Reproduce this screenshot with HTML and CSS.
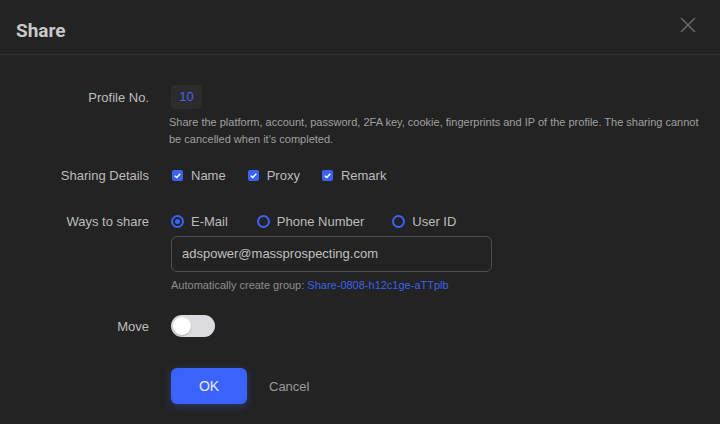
FILE: index.html
```html
<!DOCTYPE html>
<html>
<head>
<meta charset="utf-8">
<link rel="stylesheet" href="styles.css">
</head>
<body>
<div class="dialog">
  <div class="header">
    <div class="title">Share</div>
    <svg class="close" width="16" height="16" viewBox="0 0 16 16"><path d="M1 1L15 15M15 1L1 15" stroke="#6a6a6a" stroke-width="1.5" fill="none"/></svg>
  </div>
  <div class="body">
    <div class="row row-profile">
      <div class="label">Profile No.</div>
      <div class="content">
        <div class="profile-no">10</div>
        <div class="desc">Share the platform, account, password, 2FA key, cookie, fingerprints and IP of the profile. The sharing cannot be cancelled when it's completed.</div>
      </div>
    </div>
    <div class="row row-details">
      <div class="label">Sharing Details</div>
      <div class="content options">
        <span class="opt"><span class="cb"><svg width="12" height="12" viewBox="0 0 12 12"><path d="M3 6.2L5.2 8.2L9 4" stroke="#fff" stroke-width="1.6" fill="none"/></svg></span>Name</span>
        <span class="opt"><span class="cb"><svg width="12" height="12" viewBox="0 0 12 12"><path d="M3 6.2L5.2 8.2L9 4" stroke="#fff" stroke-width="1.6" fill="none"/></svg></span>Proxy</span>
        <span class="opt"><span class="cb"><svg width="12" height="12" viewBox="0 0 12 12"><path d="M3 6.2L5.2 8.2L9 4" stroke="#fff" stroke-width="1.6" fill="none"/></svg></span>Remark</span>
      </div>
    </div>
    <div class="row row-ways">
      <div class="label">Ways to share</div>
      <div class="content">
        <div class="options radios">
          <span class="opt"><span class="radio checked"></span>E-Mail</span>
          <span class="opt"><span class="radio"></span>Phone Number</span>
          <span class="opt"><span class="radio"></span>User ID</span>
        </div>
        <div class="input">adspower@massprospecting.com</div>
        <div class="auto">Automatically create group: <span class="link">Share-0808-h12c1ge-aTTplb</span></div>
      </div>
    </div>
    <div class="row row-move">
      <div class="label">Move</div>
      <div class="content"><span class="switch"><span class="knob"></span></span></div>
    </div>
    <div class="row row-actions">
      <div class="label"></div>
      <div class="content actions">
        <button class="ok">OK</button>
        <span class="cancel">Cancel</span>
      </div>
    </div>
  </div>
</div>
</body>
</html>
```
FILE: styles.css
```css
* { box-sizing: border-box; }
html, body { margin: 0; padding: 0; background: #232323; }
body { width: 720px; height: 424px; overflow: hidden; font-family: "Liberation Sans", Arial, sans-serif; color: #bdbdbd; }
.dialog { width: 720px; }
.header { height: 55px; border-bottom: 1px solid #2f2f2f; display: flex; align-items: center; justify-content: space-between; padding: 0 24px 0 16px; }
.title { font-family: Roboto, sans-serif; font-weight: 700; font-size: 19px; color: #c8c8c8; padding-top: 7px; }
.close { margin-top: -4px; }
.body { padding-top: 30px; }
.row { display: flex; }
.label { width: 149px; flex: none; text-align: right; font-size: 13px; color: #bdbdbd; }
.content { margin-left: 22px; flex: 1; }
.row-profile .label { padding-top: 5px; }
.profile-no { width: 31px; height: 24px; background: #2c2c2c; border-radius: 4px; color: #3f66f0; font-size: 13px; line-height: 24px; text-align: center; }
.desc { font-size: 11px; line-height: 17px; color: #a0a0a0; margin-left: -2px; margin-top: 5px; padding-right: 12px; }
.row-details { margin-top: 20px; }
.options { display: flex; font-size: 13px; color: #bdbdbd; }
.opt { display: inline-flex; align-items: center; }
.row-details .opt { margin-right: 22px; }
.row-details .content { margin-left: 23px; }
.cb { width: 11px; height: 11px; background: #3a63f5; border-radius: 2px; display: inline-flex; align-items: center; justify-content: center; margin-right: 8px; }
.cb svg { width: 11px; height: 11px; }
.row-ways { margin-top: 31px; }
.radios .opt { margin-right: 29px; }
.radios .opt:nth-child(2) { margin-right: 28px; }
.radio { width: 13px; height: 13px; border: 2px solid #3a63f5; border-radius: 50%; margin-right: 7px; display: inline-flex; align-items: center; justify-content: center; }
.radio.checked::after { content: ""; width: 5px; height: 5px; border-radius: 50%; background: #3a63f5; }
.input { margin-top: 7px; width: 321px; height: 36px; border: 1px solid #4f4f4f; border-radius: 6px; padding-left: 10px; line-height: 34px; font-size: 13px; color: #c0c0c0; }
.auto { margin-top: 7px; font-size: 11px; color: #8e8e8e; }
.link { color: #3b62ec; }
.row-move { margin-top: 24px; align-items: center; }
.switch { display: block; width: 44px; height: 22px; background: #dcdce0; border-radius: 11px; position: relative; }
.knob { position: absolute; left: 2px; top: 2px; width: 18px; height: 18px; border-radius: 50%; background: #fff; box-shadow: 0 1px 2px rgba(0,0,0,0.2); }
.row-actions { margin-top: 31px; }
.actions { display: flex; align-items: center; }
.ok { width: 76px; height: 36px; border: none; border-radius: 6px; background: #3b62fb; color: #e8ecff; font-family: "Liberation Sans", Arial, sans-serif; font-size: 14px; box-shadow: 0 2px 8px rgba(59,98,251,0.35); }
.cancel { margin-left: 22px; font-size: 13px; color: #9a9a9a; }
```
